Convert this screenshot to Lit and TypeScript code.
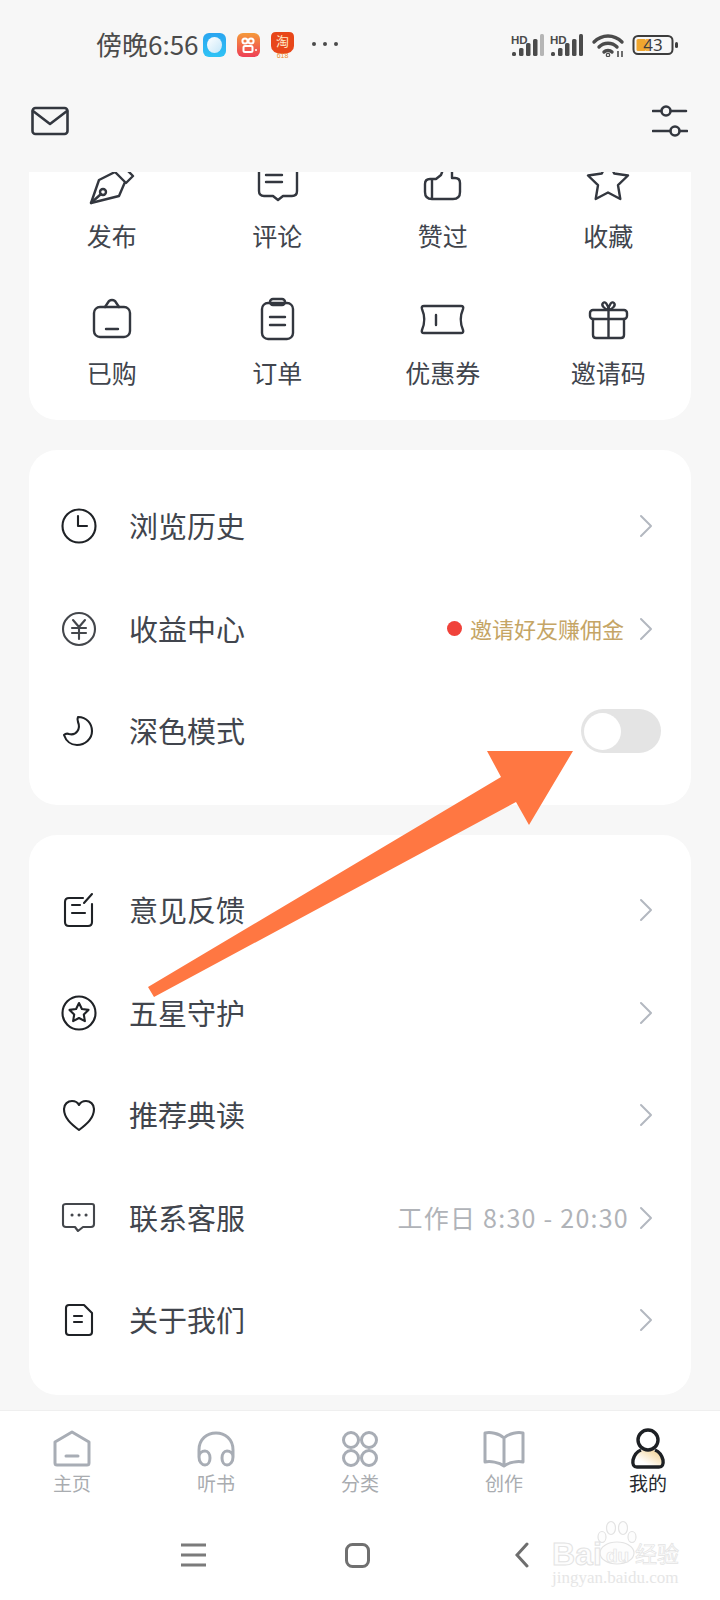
import { LitElement, html, css, svg } from "lit";
import { customElement } from "lit/decorators.js";

const ic = (size: number, body: unknown, sw = 2.4, color = "#33373f") => html`
  <svg width=${size} height=${size} viewBox="0 0 ${size} ${size}" fill="none" stroke=${color} stroke-width=${sw}
    stroke-linecap="round" stroke-linejoin="round">${body}</svg>`;

const starPath = (cx: number, cy: number, R: number, r: number) => {
  let d = "";
  for (let i = 0; i < 10; i++) {
    const a = -Math.PI / 2 + (i * Math.PI) / 5;
    const q = i % 2 ? r : R;
    d += `${i ? "L" : "M"}${(cx + q * Math.cos(a)).toFixed(1)} ${(cy + q * Math.sin(a)).toFixed(1)}`;
  }
  return d + "Z";
};

const gridItems = [
  { t: "发布", i: svg`<path d="M3 44 L11 21 L27 13 L37 23 L31 37 Z"/><path d="M27 11 L33 5 L45 17 L38 24"/><circle cx="15" cy="33" r="3"/><path d="M3 44 L13 35"/>` },
  { t: "评论", i: svg`<path d="M10 4 H40 Q44 4 44 8 V32 Q44 37 39 37 H30 L25 41 L20 37 H11 Q6 37 6 32 V8 Q6 4 10 4Z"/><path d="M13 16 H29 M13 23 H29"/>` },
  { t: "赞过", i: svg`<path d="M17 20 L22 16 L25 8 H28 Q33 8 33 12 V19 H36 Q41 19 41 24 V33 Q41 40 34 40 H13 Q6 40 6 33 V25 Q6 20 11 20 H17 M13 20 V40"/>` },
  { t: "收藏", i: svg`<path d=${starPath(24, 23, 21, 10.5)}/>` },
  { t: "已购", i: svg`<rect x="6" y="11" width="36" height="30" rx="6"/><path d="M17 11 L21 5 Q24 3 27 5 L31 11 M18 33 H30"/>` },
  { t: "订单", i: svg`<rect x="9" y="7" width="31" height="36" rx="6"/><rect x="17" y="3" width="15" height="6" rx="3"/><path d="M17 21 H32 M17 29 H32"/>` },
  { t: "优惠券", i: svg`<path d="M5 10 H42 Q45 10 44 13 C41 20 41 27 44 34 Q45 37 42 37 H5 Q2 37 3 34 C6 27 6 20 3 13 Q2 10 5 10Z M17 19 V29"/>` },
  { t: "邀请码", i: svg`<rect x="6" y="14" width="37" height="9" rx="3"/><path d="M9 23 V39 Q9 42 12 42 H37 Q40 42 40 39 V23 M24.5 14 V42 M24.5 14 C20 13 17 9 19 7 C21 5 24 8 24.5 14 C25 8 28 5 30 7 C32 9 29 13 24.5 14"/>` },
];

const rowIcon = {
  clock: svg`<circle cx="18" cy="18" r="16.5"/><path d="M17 8 V18 H26"/>`,
  yen: svg`<circle cx="18" cy="18" r="16"/><path d="M12 9 L18 16 L24 9 M11 17 H25 M11 22 H25 M18 16 V28"/>`,
  moon: svg`<path d="M17 4 C26 4 31 11 31 18 C31 26 24 32 16 32 C10 32 5 28 3 22 Q5 20 8 21 C15 23 20 16 17 9 Q16 6 17 4Z"/>`,
  note: svg`<path d="M22 6 H8 Q4 6 4 10 V30 Q4 34 8 34 H27 Q31 34 31 30 V12 M23 11 L31 2 M11 13 H19 M11 21 H24"/>`,
  star: svg`<circle cx="18" cy="18" r="16.5"/><path d=${starPath(18, 18, 10, 5)}/>`,
  heart: svg`<path d="M18 33 C10 27 3 21 3 12 C3 7 7 4 11 4 C14 4 17 6 18 8 C19 6 22 4 25 4 C29 4 33 7 33 12 C33 21 26 27 18 33Z"/>`,
  chat: svg`<path d="M5 4 H31 Q33 4 33 6 V24 Q33 27 30 27 H22 L17 31 L14 27 H5 Q2 27 2 24 V6 Q2 4 5 4Z"/><path d="M11 15 h.1 M18 15 h.1 M25 15 h.1" stroke-width="3"/>`,
  doc: svg`<path d="M8 3 H23 L31 11 V30 Q31 33 28 33 H8 Q5 33 5 30 V6 Q5 3 8 3Z M13 14 H21 M13 20 H21"/>`,
};

const tabs = [
  { t: "主页", i: svg`<path d="M5 15 L22 5 L39 15 V36 Q39 38 37 38 H7 Q5 38 5 36Z M16 29 H28"/>` },
  { t: "听书", i: svg`<path d="M5 30 V23 C5 12 13 6 22 6 C31 6 39 12 39 23 V30 M5 30 C5 26 8 24 11 24 C14 24 16 27 16 31 C16 35 14 38 11 38 C8 38 5 35 5 30Z M39 30 C39 26 36 24 33 24 C30 24 28 27 28 31 C28 35 30 38 33 38 C36 38 39 35 39 30Z"/>` },
  { t: "分类", i: svg`<circle cx="13" cy="13" r="7.5"/><circle cx="31" cy="13" r="7.5"/><circle cx="13" cy="31" r="7.5"/><circle cx="31" cy="31" r="7.5"/>` },
  { t: "创作", i: svg`<path d="M22 11 C17 6 8 5 3 6 V35 C8 34 17 35 22 39 C27 35 36 34 41 35 V6 C36 5 27 6 22 11Z M22 11 V39"/>` },
];

@customElement("app-root")
export class AppRoot extends LitElement {
  static styles = css`
    :host { display: block; position: relative; width: 720px; height: 1600px; overflow: hidden; background: #f7f7f7;
      font-family: "Noto Sans CJK SC", "Noto Sans", sans-serif; color: #41454d; }
    .header { height: 172px; box-sizing: border-box; display: flex; flex-direction: column; }
    .status { height: 90px; box-sizing: border-box; padding: 0 40px 0 96px; display: flex; align-items: center; }
    .time { font-size: 26px; line-height: 30px; color: #4b4b4b; width: 104px; margin-top: -3px; white-space: nowrap; font-family: "Noto Sans CJK SC", sans-serif; }
    .apps { display: flex; gap: 11px; align-items: center; margin-left: 3px; }
    .dots { margin-left: 18px; margin-top: -2px; display: flex; gap: 7px; }
    .dots i { width: 4px; height: 4px; border-radius: 50%; background: #4b4b4b; display: block; }
    .sys { margin-left: auto; display: flex; align-items: center; gap: 1px; }
    .sys svg { display: block; }
    .tool { display: flex; justify-content: space-between; align-items: center; padding: 0 32px 0 30px; height: 56px; margin-top: 3px; }
    main { height: 1238px; overflow: hidden; }
    .card { background: #fff; margin: 0 29px 30px; border-radius: 28px; }
    .grid { display: grid; grid-template-columns: repeat(4, 1fr); row-gap: 43px; margin-top: -13px; padding: 0 0 30px; border-radius: 0 0 28px 28px; }
    .cell { display: flex; flex-direction: column; align-items: center; gap: 10px; }
    .cell svg { display: block; }
    .cell span { font-size: 25px; line-height: 36px; white-space: nowrap; }
    .list { padding: 25px 0 0; height: 355px; box-sizing: border-box; }
    .list.long { height: 560px; padding-top: 24px; }
    .row { height: 102.5px; display: flex; align-items: center; padding: 0 30px 0 32px; }
    .rowicon { width: 36px; height: 36px; margin-right: 32px; display: block; }
    .label { font-size: 29px; line-height: 40px; white-space: nowrap; margin-top: -2px; }
    .right { margin-left: auto; display: flex; align-items: center; }
    .dot { width: 15px; height: 15px; border-radius: 50%; background: #f0423a; margin-right: 8px; }
    .gold { font-size: 22px; color: #c5a565; line-height: 30px; white-space: nowrap; margin-right: 5px; margin-top: -2px; }
    .gray { font-size: 25px; color: #b0b3b8; line-height: 30px; letter-spacing: 1.25px; white-space: nowrap; margin-top: -1px; }
    .chev { margin: 0 8px 0 10px; display: block; }
    .toggle { margin-left: auto; width: 80px; height: 44px; border-radius: 22px; background: #e4e4e4; padding: 3.5px 2.5px; box-sizing: border-box; }
    .knob { width: 37px; height: 37px; border-radius: 50%; background: #fff; }
    nav { height: 190px; background: #fff; border-top: 1px solid #efefef; box-sizing: border-box; }
    .tabs { display: grid; grid-template-columns: repeat(5, 1fr); padding-top: 16px; }
    .tab { display: flex; flex-direction: column; align-items: center; }
    .tab svg { display: block; }
    .tab span { font-size: 19px; line-height: 24px; color: #a9acb0; }
    .tab.on span { color: #26292e; }
    .gest { margin-top: 30px; height: 60px; display: flex; align-items: center; padding-left: 181px; gap: 0; }
    .gest svg { display: block; }
    .arrow { position: absolute; left: 0; top: 0; pointer-events: none; }
    .mark { position: absolute; left: 552px; top: 1520px; width: 132px; height: 66px; }
    .mark svg { position: absolute; left: 44px; top: 0; }
    .bai { position: absolute; left: 0; top: 21px; font: bold 32px/26px "Liberation Sans", sans-serif; color: #fdfdfd; -webkit-text-stroke: 1px #e3e3e3; white-space: nowrap; }
    .du { position: absolute; left: 54px; top: 24px; font: bold 19px/24px "Liberation Sans", sans-serif; color: #fdfdfd; -webkit-text-stroke: .7px #e3e3e3; }
    .jy { position: absolute; left: 83px; top: 17px; font: 22px/30px "Noto Sans CJK SC", sans-serif; color: #fdfdfd; -webkit-text-stroke: .7px #e3e3e3; white-space: nowrap; }
    .url { position: absolute; left: 0; top: 48px; font: 17px/20px "Liberation Serif", serif; color: #e6e6e6; white-space: nowrap; }
    .b43 { font: 17px/19px "Noto Sans", sans-serif; }
  `;

  chev() {
    return html`<svg class="chev" width="14" height="24" viewBox="0 0 14 24" fill="none" stroke="#b3b8c0" stroke-width="2" stroke-linecap="round" stroke-linejoin="round"><path d="M2 2 L12 12 L2 22"/></svg>`;
  }

  signal(last: string) {
    return svg`<text x="0" y="10" font-family="Liberation Sans" font-weight="bold" font-size="11.5" fill="#4b4b4b">HD</text>
      <rect x="1" y="18" width="4" height="4" rx="1.5" fill="#4b4b4b"/><rect x="8" y="14" width="4.5" height="8" rx="1.5" fill="#4b4b4b"/>
      <rect x="15" y="9" width="4.5" height="13" rx="1.5" fill="#4b4b4b"/><rect x="22" y="5" width="4.5" height="17" rx="1.5" fill="#4b4b4b"/>
      <rect x="29" y="0" width="4" height="22" rx="1.5" fill=${last}/>`;
  }

  row(icon: unknown, label: string, right: unknown = html`<div class="right">${this.chev()}</div>`, color = "#1f2226") {
    return html`<div class="row">
      <span class="rowicon">${ic(36, icon, 2.1, color)}</span>
      <span class="label">${label}</span>${right}
    </div>`;
  }

  render() {
    return html`
      <div class="header">
        <div class="status">
          <span class="time">傍晚6:56</span>
          <span class="apps">
            <svg width="23" height="24" viewBox="0 0 23 24"><defs><linearGradient id="bl" x1="0" y1="0" x2="0" y2="1"><stop offset="0" stop-color="#2aa5f0"/><stop offset="1" stop-color="#2fc3f5"/></linearGradient><linearGradient id="wh" x1="0" y1="0" x2="1" y2="1"><stop offset="0" stop-color="#fff"/><stop offset="1" stop-color="#c5e6f8"/></linearGradient></defs><rect width="23" height="24" rx="6" fill="url(#bl)"/><ellipse cx="11.5" cy="12" rx="7.5" ry="8" fill="url(#wh)"/></svg>
            <svg width="23" height="24" viewBox="0 0 23 24"><defs><linearGradient id="ks" x1="0" y1="0" x2="0" y2="1"><stop offset="0" stop-color="#f59a3a"/><stop offset="1" stop-color="#ee3f56"/></linearGradient></defs><rect width="23" height="24" rx="6" fill="url(#ks)"/><g fill="none" stroke="#fff" stroke-width="2"><circle cx="8" cy="8" r="2.6"/><circle cx="14" cy="8" r="2.6"/><rect x="6.5" y="13" width="9" height="6" rx="1.5"/></g><circle cx="19" cy="17" r="1" fill="#fff"/></svg>
            <svg width="23" height="26" viewBox="0 0 23 26"><path d="M5 0 H18 Q23 0 23 5 V14 Q23 21 11.5 22 Q0 21 0 14 V5 Q0 0 5 0Z" fill="#e8471a"/><text x="11.5" y="14" text-anchor="middle" font-family="Noto Sans CJK SC" font-size="13" fill="#ffe9c8">淘</text><text x="11.5" y="26" text-anchor="middle" font-family="Liberation Sans" font-size="7" fill="#f08a2a">618</text></svg>
          </span>
          <span class="dots"><i></i><i></i><i></i></span>
          <span class="sys">
            <svg width="120" height="24" viewBox="0 0 120 24">
              <g transform="translate(0,1)">${this.signal("#b5b5b5")}</g>
              <g transform="translate(39,1)">${this.signal("#4b4b4b")}</g>
              <g fill="none" stroke="#4b4b4b" stroke-width="3.4" stroke-linecap="round" transform="translate(81,0)">
                <path d="M2 9 C10 1 22 1 30 9"/><path d="M7 14 C12 9 20 9 25 14"/><path d="M12 19 C14 17 18 17 20 19"/>
                <circle cx="16" cy="22" r=".6"/>
              </g>
              <path d="M107 18 v6 M111 18 v6" stroke="#4b4b4b" stroke-width="1.6"/>
            </svg>
            <svg width="48" height="24" viewBox="0 0 48 24">
              <rect x="1.5" y="3" width="39" height="18" rx="4.5" fill="none" stroke="#3d3d3d" stroke-width="2"/>
              <rect x="4.5" y="6" width="9.5" height="12" rx="1.5" fill="#f0a62e"/><rect x="14" y="6" width="3" height="12" fill="#f0a62e" opacity=".9"/>
              <rect x="43" y="9" width="3" height="6" rx="1.5" fill="#3d3d3d"/>
              <text x="21" y="18" text-anchor="middle" class="b43" fill="#3d3d3d">43</text>
            </svg>
          </span>
        </div>
        <div class="tool">
          <svg width="40" height="32" viewBox="0 0 40 32" fill="none" stroke="#33373f" stroke-width="2.6" stroke-linejoin="round" stroke-linecap="round"><rect x="2.5" y="3" width="35" height="26" rx="3"/><path d="M3 6 L20 19 L37 6"/></svg>
          <svg width="36" height="32" viewBox="0 0 36 32" fill="none" stroke="#33373f" stroke-width="2.6" stroke-linecap="round"><path d="M1 6 H9 M19 6 H34 M1 26 H18 M28 26 H35"/><circle cx="14" cy="6" r="4.5"/><circle cx="23" cy="26" r="4.5"/></svg>
        </div>
      </div>
      <main>
        <section class="card grid">
          ${gridItems.map((g) => html`<div class="cell">${ic(48, g.i)}<span>${g.t}</span></div>`)}
        </section>
        <section class="card list">
          ${this.row(rowIcon.clock, "浏览历史")}
          ${this.row(rowIcon.yen, "收益中心", html`<div class="right"><i class="dot"></i><span class="gold">邀请好友赚佣金</span>${this.chev()}</div>`, "#44474c")}
          ${this.row(rowIcon.moon, "深色模式", html`<div class="toggle"><div class="knob"></div></div>`)}
        </section>
        <section class="card list long">
          ${this.row(rowIcon.note, "意见反馈")}
          ${this.row(rowIcon.star, "五星守护")}
          ${this.row(rowIcon.heart, "推荐典读")}
          ${this.row(rowIcon.chat, "联系客服", html`<div class="right"><span class="gray">工作日 8:30 - 20:30</span>${this.chev()}</div>`, "#44474c")}
          ${this.row(rowIcon.doc, "关于我们")}
        </section>
      </main>
      <nav>
        <div class="tabs">
          ${tabs.map((t) => html`<div class="tab">${ic(44, t.i, 3, "#a8adb5")}<span>${t.t}</span></div>`)}
          <div class="tab on">
            <svg width="44" height="44" viewBox="0 0 44 44" fill="none">
              <defs><linearGradient id="gd" x1="0" y1="1" x2="1" y2="0"><stop offset=".3" stop-color="#fff"/><stop offset="1" stop-color="#efc97f"/></linearGradient></defs>
              <path d="M22 22 C30 23 36 27 37 34 Q38 39 33 40 H11 Q6 39 7 34 C8 27 14 23 22 22Z" fill="url(#gd)"/>
              <g stroke="#1d2024" stroke-width="3.4" stroke-linejoin="round">
                <circle cx="22" cy="13" r="10"/>
                <path d="M15 23 C10 25 8 29 7 33 Q6 40 11 40 H33 Q38 40 37 33 C36 29 34 25 29 23"/>
              </g>
            </svg>
            <span>我的</span>
          </div>
        </div>
        <div class="gest">
          <svg width="25" height="24" viewBox="0 0 25 24" fill="none" stroke="#7b7b7b" stroke-width="3"><path d="M0 2 H25 M0 12 H25 M0 22 H25"/></svg>
          <svg style="margin-left:139px" width="25" height="25" viewBox="0 0 25 25" fill="none" stroke="#707070" stroke-width="3"><rect x="1.5" y="1.5" width="22" height="22" rx="6"/></svg>
          <svg style="margin-left:145px" width="14" height="26" viewBox="0 0 14 26" fill="none" stroke="#6e6e6e" stroke-width="3" stroke-linecap="round"><path d="M12 2 L2 13 L12 24"/></svg>
        </div>
      </nav>
      <div class="mark">
        <svg width="42" height="46" viewBox="0 0 42 46" fill="#fdfdfd" stroke="#e3e3e3" stroke-width="1.2"><ellipse cx="6" cy="17" rx="4" ry="5.5"/><ellipse cx="15" cy="8" rx="4.5" ry="6.5"/><ellipse cx="27" cy="8" rx="4.5" ry="6.5"/><ellipse cx="36" cy="17" rx="4" ry="5.5"/><ellipse cx="21" cy="33" rx="17" ry="11"/></svg>
        <span class="bai">Bai</span><span class="du">du</span><span class="jy">经验</span>
        <span class="url">jingyan.baidu.com</span>
      </div>
      <svg class="arrow" width="720" height="1600" viewBox="0 0 720 1600"><polygon fill="#ff7742" points="148,987 154,997 516,802 529,825 573,751 487,751 501,777"/></svg>
    `;
  }
}
